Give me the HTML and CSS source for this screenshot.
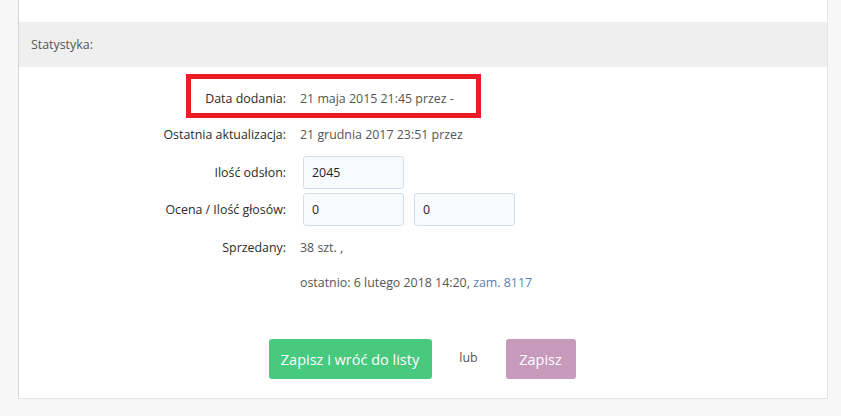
FILE: index.html
```html
<!DOCTYPE html>
<html lang="pl">
<head>
<meta charset="utf-8">
<title>Statystyka</title>
<link rel="stylesheet" href="styles.css">
</head>
<body>
<div class="panel">
  <div class="panel-top"></div>
  <div class="section-head">Statystyka:</div>
  <div class="form">
    <div class="row">
      <div class="label">Data dodania:</div>
      <div class="value">21 maja 2015 21:45 przez -</div>
    </div>
    <div class="row">
      <div class="label">Ostatnia aktualizacja:</div>
      <div class="value">21 grudnia 2017 23:51 przez</div>
    </div>
    <div class="row row-input first-input">
      <div class="label">Ilość odsłon:</div>
      <div class="value inputs">
        <input class="field" type="text" value="2045">
      </div>
    </div>
    <div class="row row-input">
      <div class="label">Ocena / Ilość głosów:</div>
      <div class="value inputs">
        <input class="field" type="text" value="0">
        <input class="field" type="text" value="0">
      </div>
    </div>
    <div class="row row-sold">
      <div class="label">Sprzedany:</div>
      <div class="value">38 szt. ,</div>
    </div>
    <div class="row row-last">
      <div class="label"></div>
      <div class="value">ostatnio: 6 lutego 2018 14:20, <a class="link" href="#">zam. 8117</a></div>
    </div>
    <div class="actions">
      <button class="btn btn-green" type="button">Zapisz i wróć do listy</button>
      <span class="or">lub</span>
      <button class="btn btn-purple" type="button">Zapisz</button>
    </div>
  </div>
  <div class="highlight"></div>
</div>
</body>
</html>
```

FILE: styles.css
```css
html, body {
  margin: 0;
  padding: 0;
}
body {
  background: #f7f7f7;
  font-family: "Open Sans", "DejaVu Sans", sans-serif;
  font-size: 12.4px;
  color: #333;
  height: 416px;
  overflow: hidden;
}
.panel {
  position: relative;
  margin-left: 18px;
  width: 808px;
  background: #fff;
  border-left: 1px solid #d3dae3;
  border-right: 1px solid #e4e4e4;
  border-bottom: 1px solid #e4e4e4;
}
.panel-top {
  height: 22px;
}
.section-head {
  height: 45px;
  background: #efefef;
  color: #555;
  padding-left: 12px;
  display: flex;
  align-items: center;
}
.form {
  padding-top: 13px;
  padding-bottom: 19px;
}
.row {
  display: flex;
  align-items: center;
  height: 36px;
}
.label {
  width: 267px;
  text-align: right;
  color: #2b2b2b;
  flex: none;
}
.value {
  margin-left: 14px;
  color: #555;
  white-space: nowrap;
}
.row-input {
  height: 33px;
  margin-top: 4px;
}
.row-sold {
  margin-top: 3px;
}
.row-last {
  height: 34px;
}
.inputs {
  display: flex;
  gap: 10px;
  margin-left: 17px;
}
.field {
  box-sizing: border-box;
  width: 101px;
  height: 33px;
  margin: 0;
  padding: 0 8px;
  border: 1px solid #d3dde8;
  border-radius: 3px;
  background: #f8fbfe;
  font-family: inherit;
  font-size: 12.4px;
  color: #222;
  outline: none;
}
.link {
  color: #5b7db5;
  text-decoration: none;
}
.actions {
  margin-top: 40px;
  padding-right: 2px;
  display: flex;
  justify-content: center;
  align-items: center;
  height: 40px;
}
.btn {
  height: 40px;
  border: none;
  border-radius: 3px;
  color: #fff;
  font-family: inherit;
  font-size: 14.5px;
  padding: 0;
  margin: 0;
  white-space: nowrap;
  cursor: pointer;
}
.btn-green {
  background: #47c97e;
  width: 163px;
}
.btn-purple {
  background: #c799bb;
  width: 70px;
}
.or {
  width: 74px;
  text-align: center;
  color: #555;
  margin-top: -4px;
}
.highlight {
  position: absolute;
  left: 167px;
  top: 74px;
  width: 295px;
  height: 44px;
  box-sizing: border-box;
  border: 5px solid #ed1c24;
}
```
